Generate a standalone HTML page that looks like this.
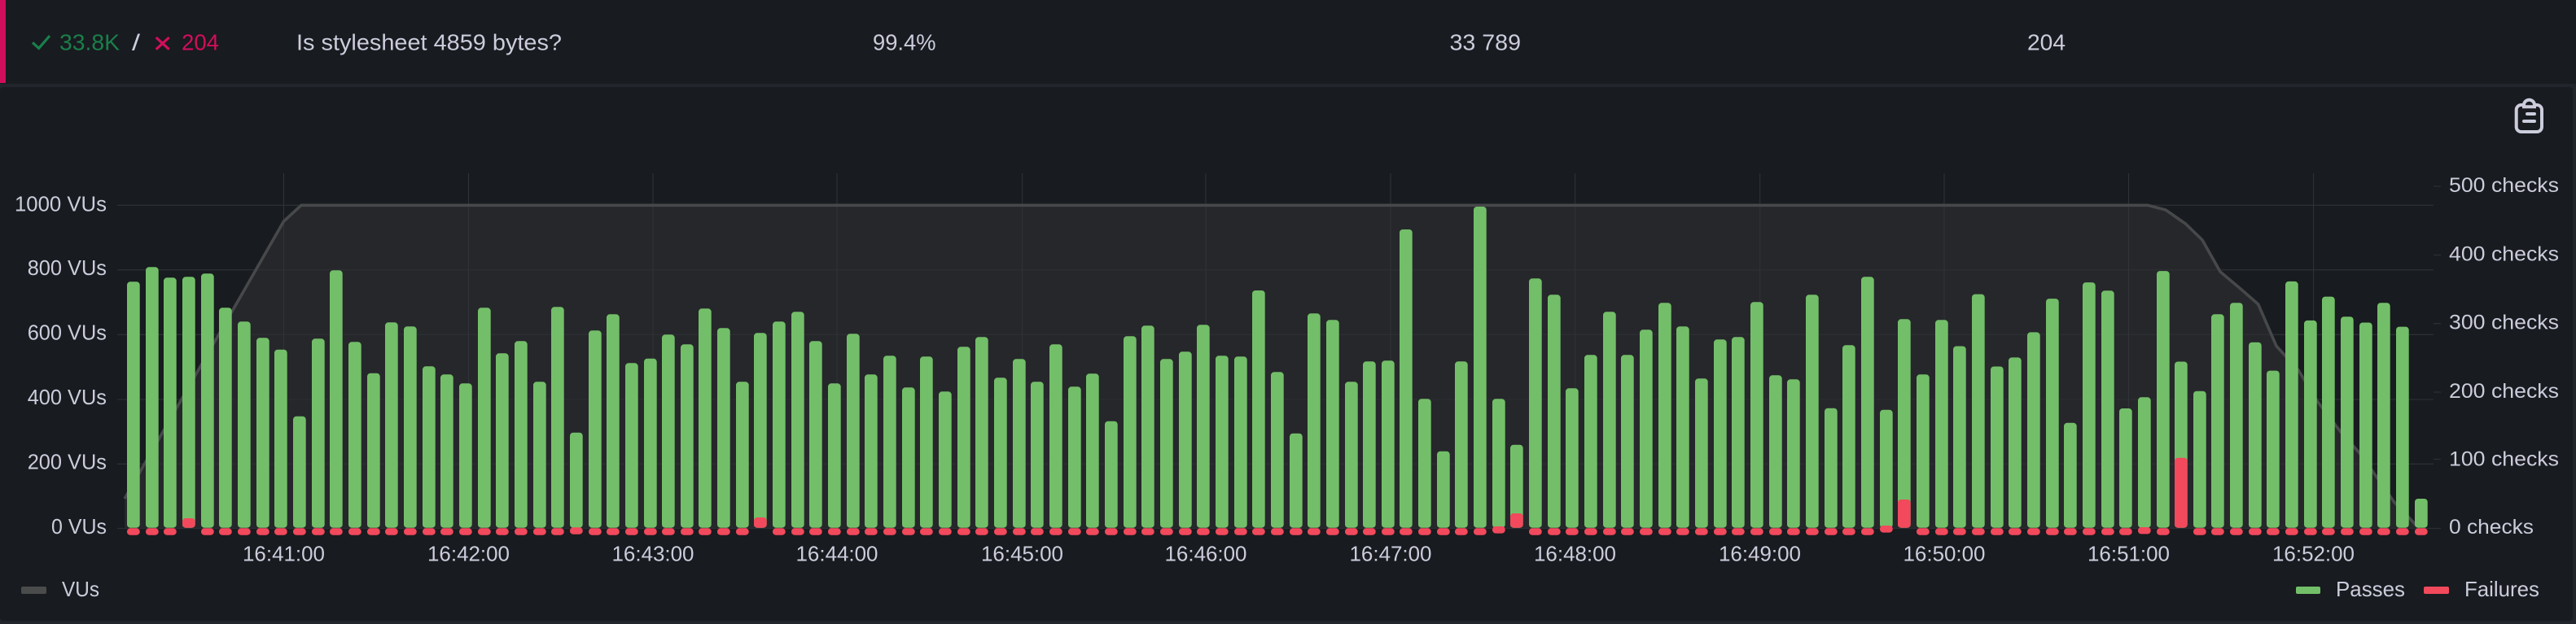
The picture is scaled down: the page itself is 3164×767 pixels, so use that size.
<!DOCTYPE html>
<html><head><meta charset="utf-8"><title>Checks</title>
<style>
html,body{margin:0;padding:0;background:#22252b;width:3164px;height:767px;overflow:hidden}
svg{display:block}
text{font-family:"Liberation Sans",sans-serif;fill:#ccccdc}
.a{font-size:26px}.r{font-size:25px}.t{font-size:28px}
.g rect{width:15.7px;rx:4px;ry:4px;fill:#73bf69}
.d rect{width:15.7px;height:8.4px;y:649.3px;rx:4px;ry:4px;fill:#f2495c}
.f rect{width:15.7px;rx:4px;ry:4px;fill:#f2495c}
</style></head><body>
<svg width="3164" height="767" viewBox="0 0 3164 767" xmlns="http://www.w3.org/2000/svg">
<rect width="3164" height="767" fill="#22252b"/>
<rect width="3164" height="103" fill="#181b1f"/>
<rect width="7" height="102" fill="#d10e5c"/>
<rect x="0" y="107" width="3160" height="656" rx="4" fill="#181b1f"/>

<path d="M40 52.3L47.7 59.3L61 44" fill="none" stroke="#1a7f4b" stroke-width="3.2"/>
<text class="t" x="73" y="61.7" textLength="74" lengthAdjust="spacingAndGlyphs" style="fill:#1a7f4b">33.8K</text>
<text class="t" x="162" y="61.7" textLength="10" lengthAdjust="spacingAndGlyphs">/</text>
<path d="M191.7 46L207.7 60.7M207.7 46L191.7 60.7" fill="none" stroke="#d10e5c" stroke-width="3.2"/>
<text class="t" x="223" y="61.7" textLength="46" lengthAdjust="spacingAndGlyphs" style="fill:#d10e5c">204</text>
<text class="t" x="364" y="61.7" textLength="326" lengthAdjust="spacingAndGlyphs">Is stylesheet 4859 bytes?</text>
<text class="t" x="1072" y="61.7" textLength="77.5" lengthAdjust="spacingAndGlyphs">99.4%</text>
<text class="t" x="1780.5" y="61.7" textLength="87.5" lengthAdjust="spacingAndGlyphs">33 789</text>
<text class="t" x="2490" y="61.7" textLength="47" lengthAdjust="spacingAndGlyphs">204</text>

<g fill="none" stroke="#ccccdc" stroke-width="4" stroke-linecap="round">
<rect x="3090.7" y="129" width="31.3" height="33" rx="6"/>
<path d="M3100 131.3V129a6.5 6.3 0 0 1 13 0V131.3Z" fill="#181b1f"/>
<path d="M3104 140H3113M3100 149H3113"/>
</g>

<path d="M153 649L153 613L348.5 272L370 252.3L2638 252.3L2660 258L2684.4 275L2705 295L2727 334L2752 355L2773.7 374L2796 425.4L2823 455L2846 493L2874 529.6L2900 559L2940.5 617L2968.6 646.6L2971 649Z" fill="#26272b"/>

<g stroke="#2b2e32" stroke-width="1.3" fill="none">
<path d="M144 252.3H2989M144 331.7H2989M144 411.3H2989M144 491H2989M144 570.3H2989M144 649.5H2998"/>
<path d="M2989 229H2998M2989 313.5H2998M2989 397.7H2998M2989 482H2998M2989 564.5H2998"/>
<path stroke="#303337" stroke-width="1" d="M348.5 213V649M575.5 213V649M802 213V649M1028 213V649M1255.6 213V649M1481 213V649M1708 213V649M1934.7 213V649M2161.7 213V649M2388 213V649M2614.5 213V649M2841.6 213V649"/>
</g>
<path d="M153 613L348.5 272L370 252.3L2638 252.3L2660 258L2684.4 275L2705 295L2727 334L2752 355L2773.7 374L2796 425.4L2823 455L2846 493L2874 529.6L2900 559L2940.5 617L2968.6 646.6" fill="none" stroke="#47484a" stroke-width="3.6"/>

<g class="g">
<rect x="156" y="346.3" height="302.4"/><rect x="179" y="328.3" height="320.4"/><rect x="201" y="341.3" height="307.4"/><rect x="224" y="340.3" height="308.4"/><rect x="247" y="336.3" height="312.4"/>
<rect x="269" y="378.3" height="270.4"/><rect x="292" y="395.3" height="253.4"/><rect x="315" y="415.3" height="233.4"/><rect x="337" y="429.7" height="219"/><rect x="360" y="511.7" height="137"/>
<rect x="383" y="416.3" height="232.4"/><rect x="405" y="332.3" height="316.4"/><rect x="428" y="420.3" height="228.4"/><rect x="451" y="458.7" height="190"/><rect x="473" y="396.3" height="252.4"/>
<rect x="496" y="401.3" height="247.4"/><rect x="519" y="450.3" height="198.4"/><rect x="541" y="460.3" height="188.4"/><rect x="564" y="471.3" height="177.4"/><rect x="587" y="378.3" height="270.4"/>
<rect x="609" y="434.3" height="214.4"/><rect x="632" y="419.3" height="229.4"/><rect x="655" y="469.3" height="179.4"/><rect x="677" y="377.3" height="271.4"/><rect x="700" y="531.7" height="117"/>
<rect x="723" y="406.3" height="242.4"/><rect x="745" y="386.3" height="262.4"/><rect x="768" y="446.3" height="202.4"/><rect x="791" y="440.7" height="208"/><rect x="813" y="411.3" height="237.4"/>
<rect x="836" y="423.3" height="225.4"/><rect x="858" y="379.3" height="269.4"/><rect x="881" y="403.3" height="245.4"/><rect x="904" y="469.3" height="179.4"/><rect x="926" y="409.3" height="239.4"/>
<rect x="949" y="395.3" height="253.4"/><rect x="972" y="383.3" height="265.4"/><rect x="994" y="419.3" height="229.4"/><rect x="1017" y="471.3" height="177.4"/><rect x="1040" y="410.3" height="238.4"/>
<rect x="1062" y="460.3" height="188.4"/><rect x="1085" y="437.3" height="211.4"/><rect x="1108" y="476.3" height="172.4"/><rect x="1130" y="438.3" height="210.4"/><rect x="1153" y="481.3" height="167.4"/>
<rect x="1176" y="426.3" height="222.4"/><rect x="1198" y="414.3" height="234.4"/><rect x="1221" y="464.3" height="184.4"/><rect x="1244" y="441.3" height="207.4"/><rect x="1266" y="469.3" height="179.4"/>
<rect x="1289" y="423.3" height="225.4"/><rect x="1312" y="475.3" height="173.4"/><rect x="1334" y="459.3" height="189.4"/><rect x="1357" y="517.7" height="131"/><rect x="1380" y="413.3" height="235.4"/>
<rect x="1402" y="400.3" height="248.4"/><rect x="1425" y="441.3" height="207.4"/><rect x="1448" y="432.3" height="216.4"/><rect x="1470" y="399.3" height="249.4"/><rect x="1493" y="437.3" height="211.4"/>
<rect x="1516" y="438.3" height="210.4"/><rect x="1538" y="357" height="291.7"/><rect x="1561" y="457.3" height="191.4"/><rect x="1584" y="532.7" height="116"/><rect x="1606" y="385.3" height="263.4"/>
<rect x="1629" y="393.3" height="255.4"/><rect x="1652" y="469.3" height="179.4"/><rect x="1674" y="444.3" height="204.4"/><rect x="1697" y="443.3" height="205.4"/><rect x="1719" y="282" height="366.7"/>
<rect x="1742" y="490.3" height="158.4"/><rect x="1765" y="554.7" height="94"/><rect x="1787" y="444.3" height="204.4"/><rect x="1810" y="254" height="394.7"/><rect x="1833" y="490.3" height="158.4"/>
<rect x="1855" y="546.7" height="102"/><rect x="1878" y="342.3" height="306.4"/><rect x="1901" y="362.3" height="286.4"/><rect x="1923" y="477.3" height="171.4"/><rect x="1946" y="436.3" height="212.4"/>
<rect x="1969" y="383.3" height="265.4"/><rect x="1991" y="436.3" height="212.4"/><rect x="2014" y="405.3" height="243.4"/><rect x="2037" y="372.3" height="276.4"/><rect x="2059" y="401.3" height="247.4"/>
<rect x="2082" y="465.3" height="183.4"/><rect x="2105" y="417.3" height="231.4"/><rect x="2127" y="414.3" height="234.4"/><rect x="2150" y="371.3" height="277.4"/><rect x="2173" y="461.3" height="187.4"/>
<rect x="2195" y="466.3" height="182.4"/><rect x="2218" y="362.3" height="286.4"/><rect x="2241" y="501.7" height="147"/><rect x="2263" y="424.3" height="224.4"/><rect x="2286" y="340.3" height="308.4"/>
<rect x="2309" y="503.7" height="145"/><rect x="2331" y="392.3" height="256.4"/><rect x="2354" y="460.3" height="188.4"/><rect x="2377" y="393.3" height="255.4"/><rect x="2399" y="425.5" height="223.2"/>
<rect x="2422" y="361.6" height="287.1"/><rect x="2445" y="450.5" height="198.2"/><rect x="2467" y="439.4" height="209.3"/><rect x="2490" y="408.4" height="240.3"/><rect x="2513" y="367.1" height="281.6"/>
<rect x="2535" y="519.8" height="128.9"/><rect x="2558" y="347.1" height="301.6"/><rect x="2581" y="357.3" height="291.4"/><rect x="2603" y="502" height="146.7"/><rect x="2626" y="488.3" height="160.4"/>
<rect x="2649" y="333.1" height="315.6"/><rect x="2671" y="444.5" height="204.2"/><rect x="2694" y="480.7" height="168"/><rect x="2716" y="386.3" height="262.4"/><rect x="2739" y="372.2" height="276.5"/>
<rect x="2762" y="420.7" height="228"/><rect x="2784" y="455.6" height="193.1"/><rect x="2807" y="345.9" height="302.8"/><rect x="2830" y="393.9" height="254.8"/><rect x="2852" y="364.6" height="284.1"/>
<rect x="2875" y="389.2" height="259.5"/><rect x="2898" y="396.5" height="252.2"/><rect x="2920" y="372.2" height="276.5"/><rect x="2943" y="401.6" height="247.1"/><rect x="2966" y="613" height="35.7"/>
</g>
<g class="f">
<rect x="224" y="637" height="11.7"/><rect x="926" y="636" height="12.7"/><rect x="1855" y="631" height="17.7"/><rect x="2331" y="614" height="34.7"/><rect x="2671" y="562.8" height="85.9"/>
<rect x="700" y="648.3" height="8.4"/><rect x="1833" y="647" height="8.6"/><rect x="2309" y="646" height="8.6"/><rect x="2626" y="648" height="8.4"/>
</g>
<g class="d">
<rect x="156"/><rect x="179"/><rect x="201"/><rect x="247"/><rect x="269"/><rect x="292"/><rect x="315"/><rect x="337"/><rect x="360"/><rect x="383"/><rect x="405"/><rect x="428"/><rect x="451"/><rect x="473"/><rect x="496"/><rect x="519"/><rect x="541"/><rect x="564"/><rect x="587"/><rect x="609"/><rect x="632"/><rect x="655"/><rect x="677"/><rect x="723"/><rect x="745"/><rect x="768"/><rect x="791"/><rect x="813"/><rect x="836"/><rect x="858"/><rect x="881"/><rect x="904"/><rect x="949"/><rect x="972"/><rect x="994"/><rect x="1017"/><rect x="1040"/><rect x="1062"/><rect x="1085"/><rect x="1108"/><rect x="1130"/><rect x="1153"/><rect x="1176"/><rect x="1198"/><rect x="1221"/><rect x="1244"/><rect x="1266"/><rect x="1289"/><rect x="1312"/><rect x="1334"/><rect x="1357"/><rect x="1380"/><rect x="1402"/><rect x="1425"/><rect x="1448"/><rect x="1470"/><rect x="1493"/><rect x="1516"/><rect x="1538"/><rect x="1561"/><rect x="1584"/><rect x="1606"/><rect x="1629"/><rect x="1652"/><rect x="1674"/><rect x="1697"/><rect x="1719"/><rect x="1742"/><rect x="1765"/><rect x="1787"/><rect x="1810"/><rect x="1878"/><rect x="1901"/><rect x="1923"/><rect x="1946"/><rect x="1969"/><rect x="1991"/><rect x="2014"/><rect x="2037"/><rect x="2059"/><rect x="2082"/><rect x="2105"/><rect x="2127"/><rect x="2150"/><rect x="2173"/><rect x="2195"/><rect x="2218"/><rect x="2241"/><rect x="2263"/><rect x="2286"/><rect x="2354"/><rect x="2377"/><rect x="2399"/><rect x="2422"/><rect x="2445"/><rect x="2467"/><rect x="2490"/><rect x="2513"/><rect x="2535"/><rect x="2558"/><rect x="2581"/><rect x="2603"/><rect x="2649"/><rect x="2694"/><rect x="2716"/><rect x="2739"/><rect x="2762"/><rect x="2784"/><rect x="2807"/><rect x="2830"/><rect x="2852"/><rect x="2875"/><rect x="2898"/><rect x="2920"/><rect x="2943"/><rect x="2966"/>
</g>

<g class="a" lengthAdjust="spacingAndGlyphs">
<text class="a" x="18" y="259.3" textLength="113" lengthAdjust="spacingAndGlyphs">1000 VUs</text>
<text class="a" x="33.7" y="338" textLength="97.3" lengthAdjust="spacingAndGlyphs">800 VUs</text>
<text class="a" x="33.7" y="417.3" textLength="97.3" lengthAdjust="spacingAndGlyphs">600 VUs</text>
<text class="a" x="33.7" y="497" textLength="97.3" lengthAdjust="spacingAndGlyphs">400 VUs</text>
<text class="a" x="33.7" y="576.7" textLength="97.3" lengthAdjust="spacingAndGlyphs">200 VUs</text>
<text class="a" x="63" y="656" textLength="68" lengthAdjust="spacingAndGlyphs">0 VUs</text>

<text class="a" x="298" y="689.3" textLength="101" lengthAdjust="spacingAndGlyphs">16:41:00</text>
<text class="a" x="525" y="689.3" textLength="101" lengthAdjust="spacingAndGlyphs">16:42:00</text>
<text class="a" x="751.5" y="689.3" textLength="101" lengthAdjust="spacingAndGlyphs">16:43:00</text>
<text class="a" x="977.5" y="689.3" textLength="101" lengthAdjust="spacingAndGlyphs">16:44:00</text>
<text class="a" x="1205" y="689.3" textLength="101" lengthAdjust="spacingAndGlyphs">16:45:00</text>
<text class="a" x="1430.5" y="689.3" textLength="101" lengthAdjust="spacingAndGlyphs">16:46:00</text>
<text class="a" x="1657.5" y="689.3" textLength="101" lengthAdjust="spacingAndGlyphs">16:47:00</text>
<text class="a" x="1884" y="689.3" textLength="101" lengthAdjust="spacingAndGlyphs">16:48:00</text>
<text class="a" x="2111" y="689.3" textLength="101" lengthAdjust="spacingAndGlyphs">16:49:00</text>
<text class="a" x="2337.5" y="689.3" textLength="101" lengthAdjust="spacingAndGlyphs">16:50:00</text>
<text class="a" x="2564" y="689.3" textLength="101" lengthAdjust="spacingAndGlyphs">16:51:00</text>
<text class="a" x="2791" y="689.3" textLength="101" lengthAdjust="spacingAndGlyphs">16:52:00</text>

<text class="r" x="3008" y="236" textLength="135" lengthAdjust="spacingAndGlyphs">500 checks</text>
<text class="r" x="3008" y="320.5" textLength="135" lengthAdjust="spacingAndGlyphs">400 checks</text>
<text class="r" x="3008" y="404.5" textLength="135" lengthAdjust="spacingAndGlyphs">300 checks</text>
<text class="r" x="3008" y="488.8" textLength="135" lengthAdjust="spacingAndGlyphs">200 checks</text>
<text class="r" x="3008" y="572.5" textLength="135" lengthAdjust="spacingAndGlyphs">100 checks</text>
<text class="r" x="3008" y="656" textLength="104" lengthAdjust="spacingAndGlyphs">0 checks</text>

<rect x="26" y="721" width="31" height="9" rx="2" fill="#4a4b4b"/>
<text class="a" x="76" y="733" textLength="46" lengthAdjust="spacingAndGlyphs">VUs</text>
<rect x="2820" y="721" width="30" height="9" rx="2" fill="#73bf69"/>
<text class="a" x="2869" y="733" textLength="85" lengthAdjust="spacingAndGlyphs">Passes</text>
<rect x="2977" y="721" width="31" height="9" rx="2" fill="#f2495c"/>
<text class="a" x="3027" y="733" textLength="92" lengthAdjust="spacingAndGlyphs">Failures</text>
</g>
</svg>
</body></html>
